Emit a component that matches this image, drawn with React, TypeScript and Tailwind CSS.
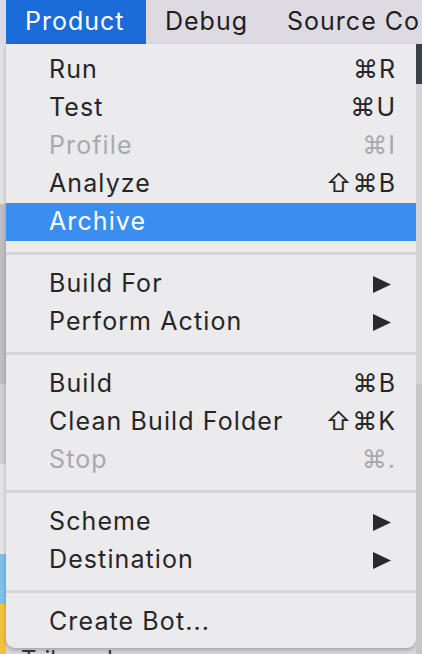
import React from "react";

type Item =
  | { kind: "item"; label: string; shortcut?: string; disabled?: boolean; active?: boolean; submenu?: boolean }
  | { kind: "sep" };

const items: Item[] = [
  { kind: "item", label: "Run", shortcut: "⌘R" },
  { kind: "item", label: "Test", shortcut: "⌘U" },
  { kind: "item", label: "Profile", shortcut: "⌘I", disabled: true },
  { kind: "item", label: "Analyze", shortcut: "⇧⌘B" },
  { kind: "item", label: "Archive", active: true },
  { kind: "sep" },
  { kind: "item", label: "Build For", submenu: true },
  { kind: "item", label: "Perform Action", submenu: true },
  { kind: "sep" },
  { kind: "item", label: "Build", shortcut: "⌘B" },
  { kind: "item", label: "Clean Build Folder", shortcut: "⇧⌘K" },
  { kind: "item", label: "Stop", shortcut: "⌘.", disabled: true },
  { kind: "sep" },
  { kind: "item", label: "Scheme", submenu: true },
  { kind: "item", label: "Destination", submenu: true },
  { kind: "sep" },
  { kind: "item", label: "Create Bot..." },
];

const Arrow = () => (
  <svg width="18" height="17" viewBox="0 0 18 17" className="mr-[5px]">
    <polygon points="0,0 18,8.5 0,17" fill="#2a2a2a" />
  </svg>
);

export default function App() {
  return (
    <div
      className="flex h-[654px] w-[422px] flex-col overflow-hidden bg-[#d8d8da]"
      style={{ fontFamily: '"Inter", "DejaVu Sans", sans-serif' }}
    >
      {/* menu bar */}
      <div className="flex h-[44px] shrink-0 items-center overflow-hidden bg-[#dddbe1] text-[25px] tracking-[1px] text-[#1e1e1e]">
        <div className="ml-[6px] flex h-full w-[140px] shrink-0 items-center bg-[#1b6bd8] pl-[19px] text-white">Product</div>
        <div className="ml-[19px] shrink-0">Debug</div>
        <div className="ml-[39px] shrink-0 whitespace-nowrap">Source Co</div>
      </div>

      <div className="flex flex-1">
        {/* left strip of window behind */}
        <div className="flex w-[6px] flex-col bg-[#cfcfd1]">
          <div className="h-[160px] bg-[#e2e2e4]" />
          <div className="h-[180px] bg-[#bfbfc2]" />
          <div className="h-[80px] bg-[#d0d0d2]" />
          <div className="h-[90px] bg-[#e4e4e6]" />
          <div className="h-[50px] bg-[#7fc0ea]" />
          <div className="flex-1 bg-[#f2c33a]" />
        </div>

        <div className="flex w-[410px] flex-col">
          {/* menu panel */}
          <div className="flex h-[604px] flex-col rounded-b-[9px] bg-[#ebeaec] pt-[7px] shadow-[0_2px_4px_rgba(0,0,0,0.25)]">
            {items.map((it, i) =>
              it.kind === "sep" ? (
                <div key={i} className="flex h-[24px] items-center">
                  <div className="h-[3px] w-full bg-[#d5d4d7]" />
                </div>
              ) : (
                <div
                  key={i}
                  className={
                    it.active
                      ? "flex h-[38px] items-center justify-between bg-[#3a8ef0] pl-[43px] pr-[20px] text-[25px] text-white"
                      : it.disabled
                        ? "flex h-[38px] items-center justify-between pl-[43px] pr-[20px] text-[25px] text-[#a9a9ab]"
                        : "flex h-[38px] items-center justify-between pl-[43px] pr-[20px] text-[25px] text-[#262626]"
                  }
                >
                  <span className="tracking-[1.1px]">{it.label}</span>
                  {it.submenu ? <Arrow /> : it.shortcut ? <span className="tracking-[1px]">{it.shortcut}</span> : null}
                </div>
              )
            )}
          </div>
          <div className="flex-1 pl-[15px] text-[24px] leading-none text-[#333]">Tribunal</div>
        </div>

        {/* right strip */}
        <div className="flex w-[6px] flex-col bg-[#bdbdc0]">
          <div className="h-[40px] bg-[#3b4048]" />
          <div className="h-[300px] bg-[#d4d4d6]" />
          <div className="flex-1 bg-[#c6c6c8]" />
        </div>
      </div>
    </div>
  );
}
